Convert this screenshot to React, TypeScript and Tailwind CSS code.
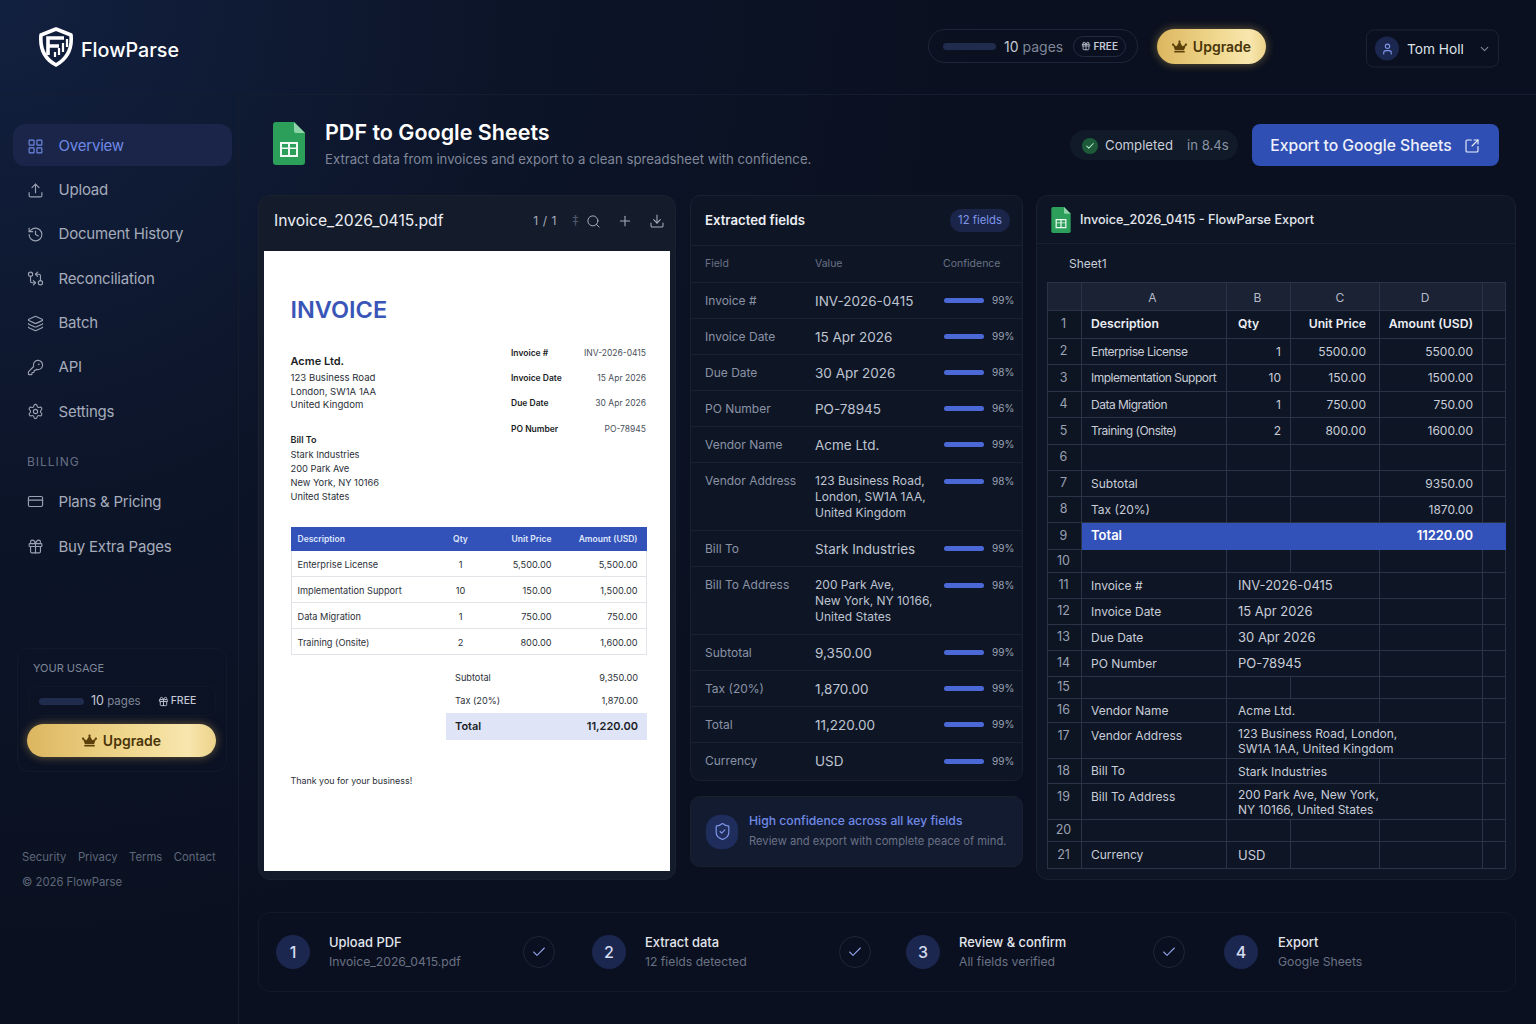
import {
  Check,
  ChevronDown,
  CreditCard,
  Download,
  Gift,
  GitCompareArrows,
  History,
  KeyRound,
  Layers,
  LayoutGrid,
  Plus,
  Search,
  Settings,
  ShieldCheck,
  SquareArrowOutUpRight,
  Upload,
  User,
} from 'lucide-react'
import { FaCrown } from 'react-icons/fa'

const NAV = [
  { label: 'Overview', icon: LayoutGrid, active: true },
  { label: 'Upload', icon: Upload },
  { label: 'Document History', icon: History },
  { label: 'Reconciliation', icon: GitCompareArrows },
  { label: 'Batch', icon: Layers },
  { label: 'API', icon: KeyRound },
  { label: 'Settings', icon: Settings },
]

const BILLING = [
  { label: 'Plans & Pricing', icon: CreditCard },
  { label: 'Buy Extra Pages', icon: Gift },
]

const FIELDS = [
  { name: 'Invoice #', value: ['INV-2026-0415'], pct: '99%' },
  { name: 'Invoice Date', value: ['15 Apr 2026'], pct: '99%' },
  { name: 'Due Date', value: ['30 Apr 2026'], pct: '98%' },
  { name: 'PO Number', value: ['PO-78945'], pct: '96%' },
  { name: 'Vendor Name', value: ['Acme Ltd.'], pct: '99%' },
  { name: 'Vendor Address', value: ['123 Business Road,', 'London, SW1A 1AA,', 'United Kingdom'], pct: '98%' },
  { name: 'Bill To', value: ['Stark Industries'], pct: '99%' },
  { name: 'Bill To Address', value: ['200 Park Ave,', 'New York, NY 10166,', 'United States'], pct: '98%' },
  { name: 'Subtotal', value: ['9,350.00'], pct: '99%' },
  { name: 'Tax (20%)', value: ['1,870.00'], pct: '99%' },
  { name: 'Total', value: ['11,220.00'], pct: '99%' },
  { name: 'Currency', value: ['USD'], pct: '99%' },
]

const INVOICE_ITEMS = [
  ['Enterprise License', '1', '5,500.00', '5,500.00'],
  ['Implementation Support', '10', '150.00', '1,500.00'],
  ['Data Migration', '1', '750.00', '750.00'],
  ['Training (Onsite)', '2', '800.00', '1,600.00'],
]

const INVOICE_META = [
  ['Invoice #', 'INV-2026-0415'],
  ['Invoice Date', '15 Apr 2026'],
  ['Due Date', '30 Apr 2026'],
  ['PO Number', 'PO-78945'],
]

// a: col A, b/c/d: values, span: how many columns the B value covers
type SheetRow = {
  h: string
  a?: string
  b?: string
  c?: string
  d?: string
  span?: number
  lines?: string[]
  big?: boolean
  bold?: boolean
  total?: boolean
}

const SHEET: SheetRow[] = [
  { h: 'h-[28px]', a: 'Description', b: 'Qty', c: 'Unit Price', d: 'Amount (USD)', bold: true },
  { h: 'h-[26px]', a: 'Enterprise License', b: '1', c: '5500.00', d: '5500.00' },
  { h: 'h-[27px]', a: 'Implementation Support', b: '10', c: '150.00', d: '1500.00' },
  { h: 'h-[26px]', a: 'Data Migration', b: '1', c: '750.00', d: '750.00' },
  { h: 'h-[27px]', a: 'Training (Onsite)', b: '2', c: '800.00', d: '1600.00' },
  { h: 'h-[26px]' },
  { h: 'h-[26px]', a: 'Subtotal', d: '9350.00' },
  { h: 'h-[26px]', a: 'Tax (20%)', d: '1870.00' },
  { h: 'h-[27px]', a: 'Total', d: '11220.00', total: true },
  { h: 'h-[23px]' },
  { h: 'h-[26px]', a: 'Invoice #', lines: ['INV-2026-0415'], span: 2, big: true },
  { h: 'h-[26px]', a: 'Invoice Date', lines: ['15 Apr 2026'], span: 2, big: true },
  { h: 'h-[26px]', a: 'Due Date', lines: ['30 Apr 2026'], span: 2, big: true },
  { h: 'h-[26px]', a: 'PO Number', lines: ['PO-78945'], span: 2, big: true },
  { h: 'h-[22px]' },
  { h: 'h-[24px]', a: 'Vendor Name', lines: ['Acme Ltd.'], span: 2 },
  { h: 'h-[36px]', a: 'Vendor Address', lines: ['123 Business Road, London,', 'SW1A 1AA, United Kingdom'], span: 3 },
  { h: 'h-[25px]', a: 'Bill To', lines: ['Stark Industries'], span: 2 },
  { h: 'h-[36px]', a: 'Bill To Address', lines: ['200 Park Ave, New York,', 'NY 10166, United States'], span: 3 },
  { h: 'h-[22px]' },
  { h: 'h-[27px]', a: 'Currency', lines: ['USD'], big: true },
]

const STEPS = [
  { n: '1', title: 'Upload PDF', sub: 'Invoice_2026_0415.pdf', width: 'w-[316px]', gap: 'ml-[19px]', check: true },
  { n: '2', title: 'Extract data', sub: '12 fields detected', width: 'w-[314px]', gap: 'ml-[19px]', check: true },
  { n: '3', title: 'Review & confirm', sub: 'All fields verified', width: 'w-[318px]', gap: 'ml-[19px]', check: true },
  { n: '4', title: 'Export', sub: 'Google Sheets', width: 'w-[200px]', gap: 'ml-[20px]', check: false },
]

function Logo() {
  return (
    <svg width="36" height="40" viewBox="0 0 36 40" fill="none">
      <path d="M18 2 L33 8 C34 18 32 30 18 38 C5 31 2 19 3 8 Z" stroke="#fff" strokeWidth="3.6" strokeLinejoin="round" />
      <path d="M10 28 V11 H26 M10 19 H21" stroke="#fff" strokeWidth="3.6" />
      <path d="M17 30 V25 M21 28 V21 M25 25 V16 M29 20 V12" stroke="#fff" strokeWidth="2.2" />
    </svg>
  )
}

function SheetsIcon({ small }: { small?: boolean }) {
  return (
    <svg width={small ? 20 : 32} height={small ? 26 : 43} viewBox="0 0 32 43">
      <path d="M3 0 H21 L32 11 V40 a3 3 0 0 1 -3 3 H3 a3 3 0 0 1 -3 -3 V3 a3 3 0 0 1 3 -3 Z" fill="#2ca05a" />
      <path d="M21 0 L32 11 H23 a2 2 0 0 1 -2 -2 Z" fill="#8fd3a8" />
      <path d="M7 20 H25 V35 H7 Z M9 22 V25.5 H15 V22 Z M17 22 V25.5 H23 V22 Z M9 27 V33 H15 V27 Z M17 27 V33 H23 V27 Z" fill="#eef9f2" fillRule="evenodd" />
    </svg>
  )
}

function Bar({ className }: { className: string }) {
  return <div className={`rounded-full bg-[#1f2c4d] ${className}`} />
}

function UpgradeButton({ className }: { className: string }) {
  return (
    <button className={`flex items-center justify-center gap-[6px] rounded-full bg-[linear-gradient(90deg,#dcb65f_0%,#f0d88f_55%,#f8e6ae_85%,#ecd38a_100%)] font-semibold text-[#4a3508] shadow-[0_0_10px_rgba(226,184,90,0.45)] ${className}`}>
      <FaCrown className="text-[#5b4109]" size={15} />
      <span>Upgrade</span>
    </button>
  )
}

function Header() {
  return (
    <header className="flex h-[95px] items-center border-b border-[#141d30] pl-[38px] pr-[37px]">
      <div className="flex items-center gap-[7px]">
        <Logo />
        <span className="translate-y-[4px] text-[19.7px] font-medium leading-none text-white">FlowParse</span>
      </div>
      <div className="ml-auto flex h-[34px] w-[210px] -translate-y-[1px] items-center rounded-full border border-[#1d2638] pl-[14px]">
        <Bar className="h-[7px] w-[53px]" />
        <span className="ml-[8px] text-[14px] text-[#c3c8d4]">10 <span className="text-[#7f8799]">pages</span></span>
        <span className="ml-[10px] flex h-[21px] w-[53px] items-center justify-center gap-[2px] rounded-full border border-[#232d42] text-[10px] font-semibold text-[#c3c8d4]">
          <Gift size={10} />
          FREE
        </span>
      </div>
      <UpgradeButton className="ml-[19px] h-[35px] w-[109px] -translate-y-[1px] text-[14px]" />
      <div className="ml-[100px] flex h-[38px] w-[133px] translate-y-[1.5px] items-center rounded-[8px] border border-[#1a2334] pl-[8px]">
        <span className="flex h-[24px] w-[24px] items-center justify-center rounded-full bg-[#1c2750] text-[#7f95e8]">
          <User size={13} />
        </span>
        <span className="ml-[8px] text-[13.7px] text-[#dfe2e9]">Tom Holl</span>
        <ChevronDown className="ml-[14px] text-[#7f8799]" size={13} />
      </div>
    </header>
  )
}

function NavItem({ label, icon: Icon, active }: { label: string; icon: typeof Upload; active?: boolean }) {
  return (
    <div className={`flex h-[42px] items-center gap-[14px] rounded-[12px] pl-[14px] pt-[2px] text-[15px] tracking-[-0.2px] ${active ? 'bg-[#1a2549] text-[#6f8ae6]' : 'text-[#a5acbb]'}`}>
      <Icon size={17} strokeWidth={1.6} className={active ? 'text-[#6f8ae6]' : 'text-[#9aa2b3]'} />
      <span className="ml-[0.5px]">{label}</span>
    </div>
  )
}

function Sidebar() {
  return (
    <aside className="w-[239px] shrink-0 border-r border-[#141c2d] pl-[13px] pr-[6px] pt-[29px]">
      <nav className="flex flex-col gap-[2.33px]">
        {NAV.map((n) => (
          <NavItem key={n.label} {...n} />
        ))}
      </nav>
      <div className="mt-[22px] pl-[14px] text-[12px] leading-[16px] tracking-[0.08em] text-[#666f82]">BILLING</div>
      <div className="mt-[10px] flex flex-col gap-[2.8px]">
        {BILLING.map((n) => (
          <NavItem key={n.label} {...n} />
        ))}
      </div>
      <div className="ml-[4px] mt-[81px] h-[124px] w-[210px] rounded-[12px] border border-[#111a2a] px-[10px] pt-[12px]">
        <div className="pl-[5px] text-[11px] leading-[14px] text-[#7f8799]">YOUR USAGE</div>
        <div className="mt-[11px] flex h-[30px] items-center rounded-[8px] border border-[#101828] pl-[10px] pt-[1px]">
          <Bar className="h-[7px] w-[45px]" />
          <span className="ml-[7px] text-[11.5px] text-[#c3c8d4]"><span className="text-[12.5px]">10</span> <span className="text-[#7f8799]">pages</span></span>
          <span className="ml-[17px] flex items-center gap-[2px] text-[10.5px] font-medium text-[#c3c8d4]">
            <Gift size={11} />
            FREE
          </span>
        </div>
        <UpgradeButton className="-ml-[1px] mt-[8px] h-[33px] w-[189px] text-[14px]" />
      </div>
      <div className="mt-[77px] flex gap-[11.5px] pl-[9px] text-[11.3px] leading-[16px] text-[#5f687b]">
        <span>Security</span>
        <span>Privacy</span>
        <span>Terms</span>
        <span>Contact</span>
      </div>
      <div className="mt-[9px] pl-[9px] text-[11.3px] leading-[16px] text-[#5f687b]">© 2026 FlowParse</div>
    </aside>
  )
}

function InvoicePage() {
  return (
    <div className="mx-[5px] h-[620px] bg-white pl-[26.5px] pr-[23px] pt-[44px] text-[#2b2f38]">
      <div className="text-[23.5px] font-semibold leading-[30px] text-[#3a55b8]">INVOICE</div>
      <div className="mt-[22px] flex items-start justify-between">
        <div className="pt-[7px]">
          <div className="text-[11px] font-semibold leading-[14px] text-[#1b1e26]">Acme Ltd.</div>
          <div className="mt-[3px] text-[9.6px] leading-[13.5px]">
            123 Business Road
            <br />
            London, SW1A 1AA
            <br />
            United Kingdom
          </div>
          <div className="mt-[21px] text-[9px] font-semibold leading-[14px] text-[#1b1e26]">Bill To</div>
          <div className="mt-[1px] text-[9.3px] leading-[14px]">
            Stark Industries
            <br />
            200 Park Ave
            <br />
            New York, NY 10166
            <br />
            United States
          </div>
        </div>
        <div className="mr-[1px] flex w-[135px] flex-col gap-[13.2px]">
          {INVOICE_META.map(([k, v]) => (
            <div key={k} className="flex justify-between text-[8.5px] leading-[12px]">
              <span className="font-semibold text-[#1b1e26]">{k}</span>
              <span className="text-[#4a4f5b]">{v}</span>
            </div>
          ))}
        </div>
      </div>
      <div className="mt-[23px]">
        <div className="grid h-[24px] grid-cols-[150px_40px_71px_95px] items-center bg-[#3352b9] pt-[1px] text-[8.5px] font-semibold text-[#dfe6fb]">
          <span className="pl-[7px]">Description</span>
          <span className="text-center">Qty</span>
          <span className="text-right">Unit Price</span>
          <span className="pr-[9px] text-right">Amount (USD)</span>
        </div>
        <div className="border-x border-[#e1e3e8]">
          {INVOICE_ITEMS.map((r) => (
            <div key={r[0]} className="-mx-[1px] grid h-[26px] grid-cols-[150px_40px_71px_95px] items-center border-b border-[#e1e3e8] pt-[3px] text-[9.2px]">
              <span className="pl-[7px]">{r[0]}</span>
              <span className="text-center">{r[1]}</span>
              <span className="text-right">{r[2]}</span>
              <span className="pr-[9px] text-right">{r[3]}</span>
            </div>
          ))}
        </div>
      </div>
      <div className="ml-auto mt-[12px] w-[201px] text-[9.2px]">
        <div className="flex h-[23px] items-center justify-between px-[9px]">
          <span>Subtotal</span>
          <span>9,350.00</span>
        </div>
        <div className="flex h-[23px] items-center justify-between px-[9px]">
          <span>Tax (20%)</span>
          <span>1,870.00</span>
        </div>
        <div className="flex h-[27px] items-center justify-between bg-[#dfe5f6] px-[9px] pt-[1px] text-[11px] font-semibold text-[#1b1e26]">
          <span>Total</span>
          <span>11,220.00</span>
        </div>
      </div>
      <div className="mt-[34px] text-[8.9px] leading-[14px]">Thank you for your business!</div>
    </div>
  )
}

function PdfPanel() {
  return (
    <section className="mr-[14px] h-full w-[418px] shrink-0 rounded-[12px] border border-[#19212f] bg-[#141c2c]">
      <div className="flex h-[55px] items-center pb-[5px] pl-[15px] pr-[10px]">
        <span className="text-[15.7px] text-[#eceef3]">Invoice_2026_0415.pdf</span>
        <span className="ml-auto text-[12px] tracking-[0.05em] text-[#a5acbb]">1 / 1</span>
        <span className="ml-[15px] text-[14px] leading-none text-[#4d566a]">‡</span>
        <Search className="ml-[7px] text-[#a5acbb]" size={15} strokeWidth={1.6} />
        <Plus className="ml-[16px] text-[#a5acbb]" size={16} strokeWidth={1.6} />
        <Download className="ml-[16px] text-[#a5acbb]" size={16} strokeWidth={1.6} />
      </div>
      <InvoicePage />
    </section>
  )
}

function FieldsPanel() {
  return (
    <div className="mr-[13px] flex w-[333px] shrink-0 flex-col">
      <section className="rounded-[10px] border border-[#19212f] bg-[#0e1626] pb-[1px]">
        <div className="flex h-[50px] items-center justify-between border-b border-[#19212f] pl-[14px] pr-[12px]">
          <span className="text-[13.2px] font-semibold text-[#eceef3]">Extracted fields</span>
          <span className="flex h-[23px] w-[60px] items-center justify-center rounded-full bg-[#1a2549] text-[11.3px] text-[#7f95e8]">12 fields</span>
        </div>
        <div className="grid h-[37px] grid-cols-[110px_128px_1fr] items-center border-b border-[#19212f] pl-[14px] text-[10.5px] text-[#6a7285]">
          <span>Field</span>
          <span>Value</span>
          <span>Confidence</span>
        </div>
        {FIELDS.map((f, i) => {
          const multi = f.value.length > 1
          return (
            <div
              key={f.name}
              className={`grid grid-cols-[110px_129px_1fr] pl-[14px] ${i < FIELDS.length - 1 ? 'border-b border-[#19212f]' : ''} ${multi ? 'h-[68px] pt-[10px]' : 'h-[36px] items-center'}`}
            >
              <span className="text-[12px] leading-[16px] text-[#8a92a4]">{f.name}</span>
              <span className={`whitespace-nowrap text-[#bfc4d0] ${multi ? 'text-[12px] leading-[16px]' : 'text-[13.5px] leading-[18px]'}`}>
                {f.value.map((v) => (
                  <span key={v} className="block">{v}</span>
                ))}
              </span>
              <span className="flex h-[16px] items-center">
                <span className="h-[5px] w-[40px] rounded-full bg-[#4a68d6]" />
                <span className="ml-[8px] text-[10px] text-[#9aa2b3]">{f.pct}</span>
              </span>
            </div>
          )
        })}
      </section>
      <section className="mt-[15px] flex h-[71px] items-center rounded-[10px] border border-[#19212f] bg-[#131b31] pl-[15px]">
        <span className="flex h-[34px] w-[32px] items-center justify-center rounded-[14px] bg-[#1f2d5c] text-[#7f95e8]">
          <ShieldCheck size={19} strokeWidth={1.5} />
        </span>
        <div className="ml-[11px] -translate-y-[1px] whitespace-nowrap">
          <div className="text-[12.2px] font-medium leading-[18px] text-[#6f8ae6]">High confidence across all key fields</div>
          <div className="mt-[2px] text-[11.2px] leading-[18px] text-[#6a7285]">Review and export with complete peace of mind.</div>
        </div>
      </section>
    </div>
  )
}

const TD = 'whitespace-nowrap border border-[#2b3446] pl-[9px] pr-[9px] text-[#c9cdd7]'
const TH = 'border border-[#2b3446] pt-[2px]'

function SheetBody() {
  return (
    <tbody>
      <tr className="h-[28px] bg-[#1a2234] text-center text-[12px] text-[#b4bac7]">
        <td className="border border-[#2b3446]" />
        <td className={`${TH} pr-[3px]`}>A</td>
        <td className={`${TH} pr-[2px]`}>B</td>
        <td className={`${TH} pl-[10px]`}>C</td>
        <td className={`${TH} pr-[12px]`}>D</td>
        <td className="border border-[#2b3446]" />
      </tr>
      {SHEET.map((r, i) => {
        const multi = !!r.lines && r.lines.length > 1
        const size = r.total ? 'text-[13px]' : r.bold ? 'text-[12.2px]' : 'text-[12px]'
        const cell = r.total ? 'border-[#3352b9] bg-[#3352b9] font-semibold text-white' : r.bold ? 'font-semibold text-[#eceef3]' : ''
        return (
          <tr key={i} className={r.h}>
            <td className={`border border-[#2b3446] bg-[#0d1422] pr-[2px] text-center text-[12.5px] text-[#9aa2b3] ${multi ? 'pt-[4px] align-top' : ''}`}>{i + 1}</td>
            <td className={`${TD} ${size} ${cell} ${multi ? 'pt-[4px] align-top' : ''} ${i >= 1 && i <= 4 ? 'tracking-[-0.5px]' : ''}`}>{r.a}</td>
            {r.lines ? (
              <td colSpan={r.span ?? 1} className={`${TD} pl-[11px] leading-[15px] ${r.big ? 'text-[13px]' : 'text-[12px]'} ${multi ? 'pt-[3px] align-top' : ''}`}>
                {r.lines.map((l) => (
                  <span key={l} className="block">{l}</span>
                ))}
              </td>
            ) : (
              <td className={`${TD} ${size} ${cell} ${r.bold ? 'pl-[11px] text-left' : 'text-right'}`}>{r.b}</td>
            )}
            {(!r.lines || !r.span) && <td className={`${TD} !pr-[13px] ${size} ${cell} text-right`}>{r.c}</td>}
            {(!r.lines || r.span === 2 || !r.span) && <td className={`${TD} !pl-[4px] ${size} ${cell} text-right`}>{r.d}</td>}
            <td className={`${TD} ${cell}`} />
          </tr>
        )
      })}
    </tbody>
  )
}

function SheetPanel() {
  return (
    <section className="h-full min-w-0 flex-1 rounded-[12px] border border-[#19212f] bg-[#0e1626]">
      <div className="flex h-[48px] items-center gap-[9px] border-b border-[#19212f] pl-[14px]">
        <SheetsIcon small />
        <span className="text-[12.7px] font-medium text-[#e3e6ec]">Invoice_2026_0415 - FlowParse Export</span>
      </div>
      <div className="flex h-[38px] items-center pl-[32px] pt-[1px] text-[12px] text-[#c9cdd7]">Sheet1</div>
      <table className="ml-[10px] w-[458px] table-fixed border-collapse">
        <colgroup>
          <col className="w-[34px]" />
          <col className="w-[145px]" />
          <col className="w-[64px]" />
          <col className="w-[89px]" />
          <col className="w-[103px]" />
          <col className="w-[23px]" />
        </colgroup>
        <SheetBody />
      </table>
    </section>
  )
}

function Steps() {
  return (
    <section className="mt-[32px] flex h-[80px] items-center rounded-[12px] border border-[#121a2a] pl-[17px]">
      {STEPS.map((s) => (
        <div key={s.n} className={`flex shrink-0 items-center ${s.width}`}>
          <span className="flex h-[34px] w-[34px] shrink-0 items-center justify-center rounded-full bg-[#1c2750] text-[16px] font-medium text-[#d5dbf0]">{s.n}</span>
          <div className={`${s.gap} w-[194px]`}>
            <div className="pt-[1px] text-[12.9px] font-medium leading-[18px] text-[#e3e6ec]">{s.title}</div>
            <div className="mt-[1px] text-[12.2px] leading-[18px] text-[#6a7285]">{s.sub}</div>
          </div>
          {s.check && (
            <span className="flex h-[32px] w-[32px] shrink-0 items-center justify-center rounded-full border border-[#1d2638] text-[#8ea2ea]">
              <Check size={16} strokeWidth={1.6} />
            </span>
          )}
        </div>
      ))}
    </section>
  )
}

export default function App() {
  return (
    <div className="h-[1024px] w-[1536px] overflow-hidden bg-[#0a101f] bg-[radial-gradient(circle_at_0%_0%,#12203f_0%,#0c1428_28%,#0a101f_55%)] [font-family:Inter,sans-serif]">
      <Header />
      <div className="flex h-[929px]">
        <Sidebar />
        <main className="min-w-0 flex-1 pl-[19px] pr-[20px] pt-[25px]">
          <div className="flex h-[50px] items-center pl-[15px] pr-[17px]">
            <span className="-translate-y-[2px]">
              <SheetsIcon />
            </span>
            <div className="ml-[20px] -translate-y-[1px]">
              <h1 className="text-[21.5px] font-semibold leading-[24px] text-white">PDF to Google Sheets</h1>
              <p className="mt-[5px] text-[13.2px] leading-[20px] text-[#7f8799]">Extract data from invoices and export to a clean spreadsheet with confidence.</p>
            </div>
            <div className="ml-auto flex h-[30px] w-[168px] items-center rounded-full bg-[#101a28] pl-[12px] pt-[2px] text-[13.2px]">
              <span className="flex h-[16px] w-[16px] items-center justify-center rounded-full bg-[#1d5a3a] text-[#b9eccb]">
                <Check size={10} strokeWidth={2.5} />
              </span>
              <span className="ml-[7px] text-[#c9cdd7]">Completed</span>
              <span className="ml-[14px] text-[#8a92a4]">in 8.4s</span>
            </div>
            <button className="ml-[14px] flex h-[42px] w-[247px] items-center justify-center gap-[12px] rounded-[8px] bg-[#2f4fb5] pr-[1px] pt-[1px] text-[15.7px] font-medium text-[#eef1fb]">
              Export to Google Sheets
              <SquareArrowOutUpRight size={16} strokeWidth={1.7} />
            </button>
          </div>
          <div className="mt-[25px] flex h-[685px] items-start">
            <PdfPanel />
            <FieldsPanel />
            <SheetPanel />
          </div>
          <Steps />
        </main>
      </div>
    </div>
  )
}
